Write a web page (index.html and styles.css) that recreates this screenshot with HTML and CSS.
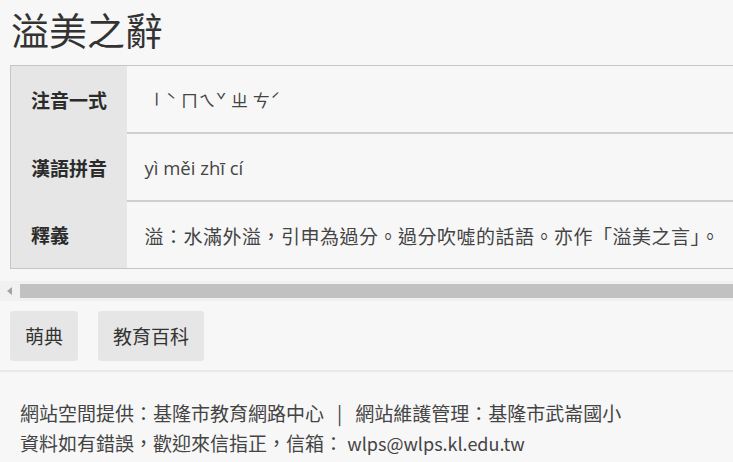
FILE: index.html
```html
<!DOCTYPE html>
<html lang="zh-Hant">
<head>
    <meta charset="UTF-8">
    <meta name="viewport" content="width=device-width, initial-scale=1.0">
    <title>溢美之辭</title>
    <link rel="stylesheet" href="styles.css">
</head>
<body>
    <div class="page">
        <!-- Word title -->
        <h1 class="word-title">溢美之辭</h1>

        <!-- Word details table -->
        <div class="table-scroll">
            <table class="word-table">
                <tr>
                    <th>注音一式</th>
                    <td class="bopomofo"><span class="upright">ㄧ</span>ˋ ㄇㄟˇ ㄓ ㄘˊ</td>
                </tr>
                <tr>
                    <th>漢語拼音</th>
                    <td class="pinyin">yì měi zhī cí</td>
                </tr>
                <tr>
                    <th>釋義</th>
                    <td class="definition">溢：水滿外溢，引申為過分。過分吹噓的話語。亦作「溢美之言」。</td>
                </tr>
            </table>
        </div>

        <!-- Horizontal scrollbar of the table -->
        <div class="fake-scrollbar">
            <span class="scroll-arrow"></span>
            <span class="scroll-thumb"></span>
        </div>

        <!-- Links -->
        <div class="link-buttons">
            <a class="link-button" href="#">萌典</a>
            <a class="link-button" href="#">教育百科</a>
        </div>
    </div>

    <footer class="site-footer">
        <p>網站空間提供：基隆市教育網路中心<span class="sep">|</span>網站維護管理：基隆市武崙國小</p>
        <p>資料如有錯誤，歡迎來信指正，信箱： <span class="email">wlps@wlps.kl.edu.tw</span></p>
    </footer>
</body>
</html>
```

FILE: styles.css
```css
html {
    overflow: hidden;
}

body {
    margin: 0;
    background-color: #f7f7f7;
    color: #333;
    font-family: "Noto Sans CJK TC", "Noto Sans", sans-serif;
    font-size: 19px;
}

.word-title {
    margin: 0;
    padding: 4px 0 0 11px;
    font-size: 38px;
    font-weight: normal;
    line-height: 50px;
    height: 65px;
    box-sizing: border-box;
    color: #333;
}

.table-scroll {
    margin-left: 10px;
    width: 800px;
}

.word-table {
    border-collapse: collapse;
    white-space: nowrap;
    border: 1.5px solid #c6c6c6;
    border-right: none;
    width: 100%;
}

.word-table th {
    width: 116px;
    box-sizing: border-box;
    height: 66px;
    background-color: #e6e6e6;
    text-align: left;
    padding: 0 0 0 20px;
    font-size: 19px;
    font-weight: bold;
    color: #2b2b2b;
}

.word-table td {
    height: 66px;
    padding: 0 40px 0 18px;
    font-size: 19px;
    color: #444;
    border-top: 2px solid #cfcfcf;
}

.word-table tr:first-child td {
    border-top: none;
}

.word-table .bopomofo {
    padding-left: 22px;
    font-size: 17px;
    letter-spacing: 0.5px;
}

.upright {
    display: inline-block;
    transform: rotate(90deg);
}

.word-table .pinyin {
    font-family: "Open Sans", "Noto Sans", sans-serif;
    font-size: 18.5px;
}

.word-table .definition {
    letter-spacing: 0.5px;
}

.fake-scrollbar {
    display: flex;
    align-items: center;
    margin-top: 12px;
    height: 20px;
    width: 800px;
    background-color: #f1f1f1;
}

.scroll-arrow {
    width: 0;
    height: 0;
    margin: 0 8px 0 7px;
    border-top: 4px solid transparent;
    border-bottom: 4px solid transparent;
    border-right: 5px solid #a3a3a3;
}

.scroll-thumb {
    flex: 1;
    height: 14px;
    background-color: #c1c1c1;
}

.link-buttons {
    display: flex;
    gap: 20px;
    padding: 10px 10px 0;
}

.link-button {
    display: block;
    padding: 0 15px;
    height: 50px;
    line-height: 50px;
    background-color: #e6e6e6;
    border-radius: 3px;
    color: #333;
    font-size: 19px;
    text-decoration: none;
}

.site-footer {
    margin-top: 9px;
    border-top: 2px solid #e8e8e8;
    padding: 26px 0 0 20px;
    color: #444;
    font-size: 19px;
}

.site-footer p {
    margin: 0;
    line-height: 30px;
    white-space: nowrap;
}

.site-footer .sep {
    margin: 0 13px;
}

.site-footer .email {
    font-size: 18px;
}
```
